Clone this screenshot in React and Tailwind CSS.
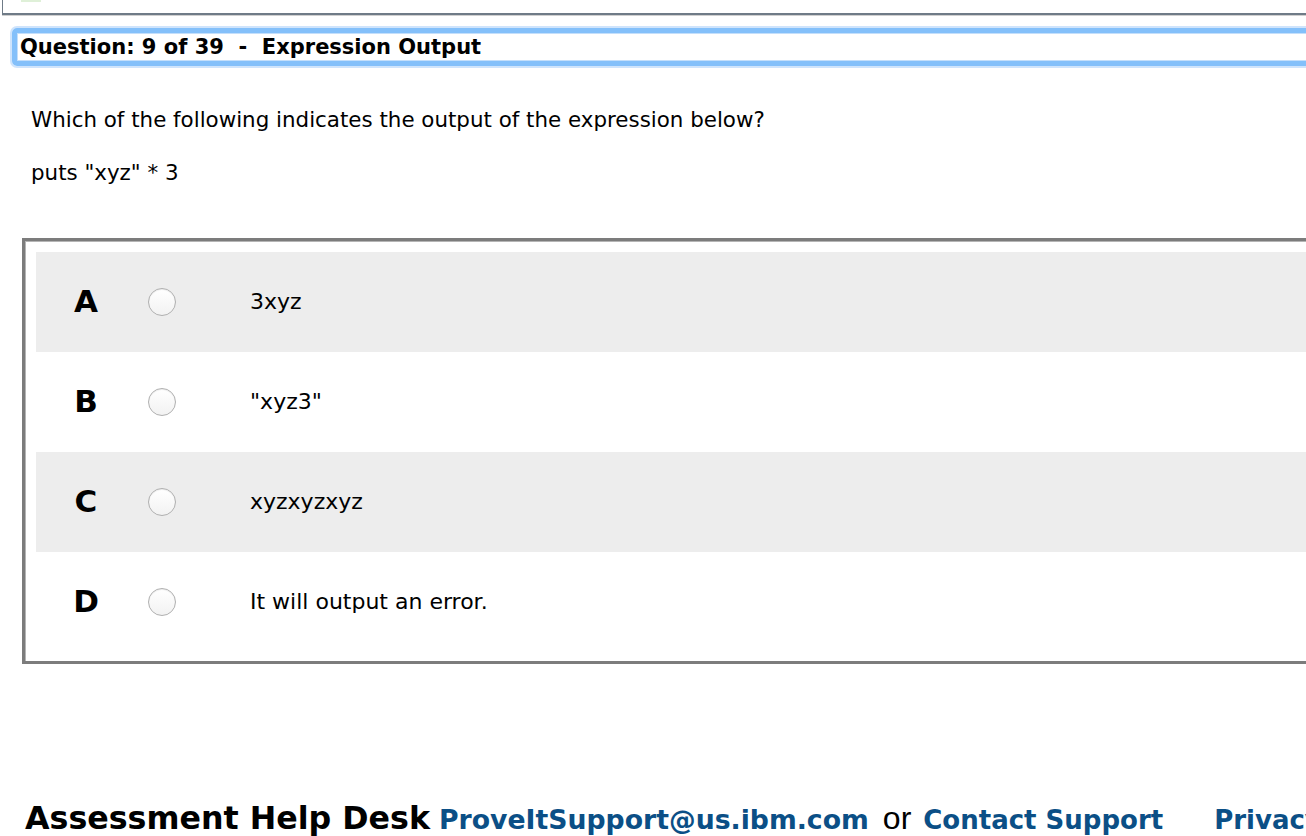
import React from "react";

const options = [
  { letter: "A", text: "3xyz", shaded: true },
  { letter: "B", text: "\"xyz3\"", shaded: false },
  { letter: "C", text: "xyzxyzxyz", shaded: true },
  { letter: "D", text: "It will output an error.", shaded: false },
];

export default function App() {
  return (
    <div className="w-[1306px] h-[836px] overflow-hidden bg-white text-black font-['DejaVu_Sans',sans-serif]">
      <div className="w-[1400px]">
        {/* cut-off frame above */}
        <div className="ml-[2px] h-[15px] border-l border-b-[2px] border-[#6f7b87] shadow-[0_1px_0_#cfcfcf] relative">
          <div className="absolute left-[18px] top-0 w-[20px] h-[2px] bg-[#dff0d8]" />
        </div>

        {/* Question header */}
        <div className="ml-[12px] mt-[13px] rounded-[5px] border-[5px] border-[#84c0fa] shadow-[0_0_0_2px_#cfe4fc,inset_0_0_0_1px_#c4dffb]">
          <div className="h-[28px] flex items-center pl-[3px] pt-[1px] text-[21px] font-bold leading-none whitespace-pre">
            Question: 9 of 39  -  Expression Output
          </div>
        </div>

        {/* Question body */}
        <div className="pl-[31px] pt-[43px] text-[21.4px] leading-none">
          <p>Which of the following indicates the output of the expression below?</p>
          <p className="mt-[32px]">puts "xyz" * 3</p>
        </div>

        {/* Options */}
        <div className="ml-[22px] mt-[54px] border-[3px] border-[#7c7c7c] shadow-[inset_1px_1px_0_#b5b5b5] pl-[11px] pt-[11px] pb-[9px]">
          {options.map((o) => (
            <div
              key={o.letter}
              className={`h-[100px] flex items-center ${o.shaded ? "bg-[#ededed]" : "bg-white"}`}
            >
              <div className="w-[100px] text-center text-[31px] font-black leading-none">{o.letter}</div>
              <div className="ml-[12px] w-[28px] h-[28px] rounded-full border border-[#b0b0b0] bg-gradient-to-b from-white to-[#f2f2f2] shadow-[inset_0_1px_1px_rgba(0,0,0,0.08)]" />
              <div className="ml-[74px] text-[22px] leading-none">{o.text}</div>
            </div>
          ))}
        </div>

        {/* Footer */}
        <div className="mt-[130px] pl-[25px] flex items-baseline whitespace-nowrap">
          <span className="text-[31.7px] font-bold">Assessment Help Desk</span>
          <span className="ml-[9px] text-[26.7px] font-bold text-[#0b4f86]">ProveItSupport@us.ibm.com</span>
          <span className="ml-[14px] text-[32px] font-['Liberation_Sans',sans-serif]">or</span>
          <span className="ml-[12px] text-[26px] font-bold text-[#0b4f86]">Contact Support</span>
          <span className="ml-[51px] text-[26px] font-bold text-[#0b4f86]">Privacy</span>
        </div>
      </div>
    </div>
  );
}
